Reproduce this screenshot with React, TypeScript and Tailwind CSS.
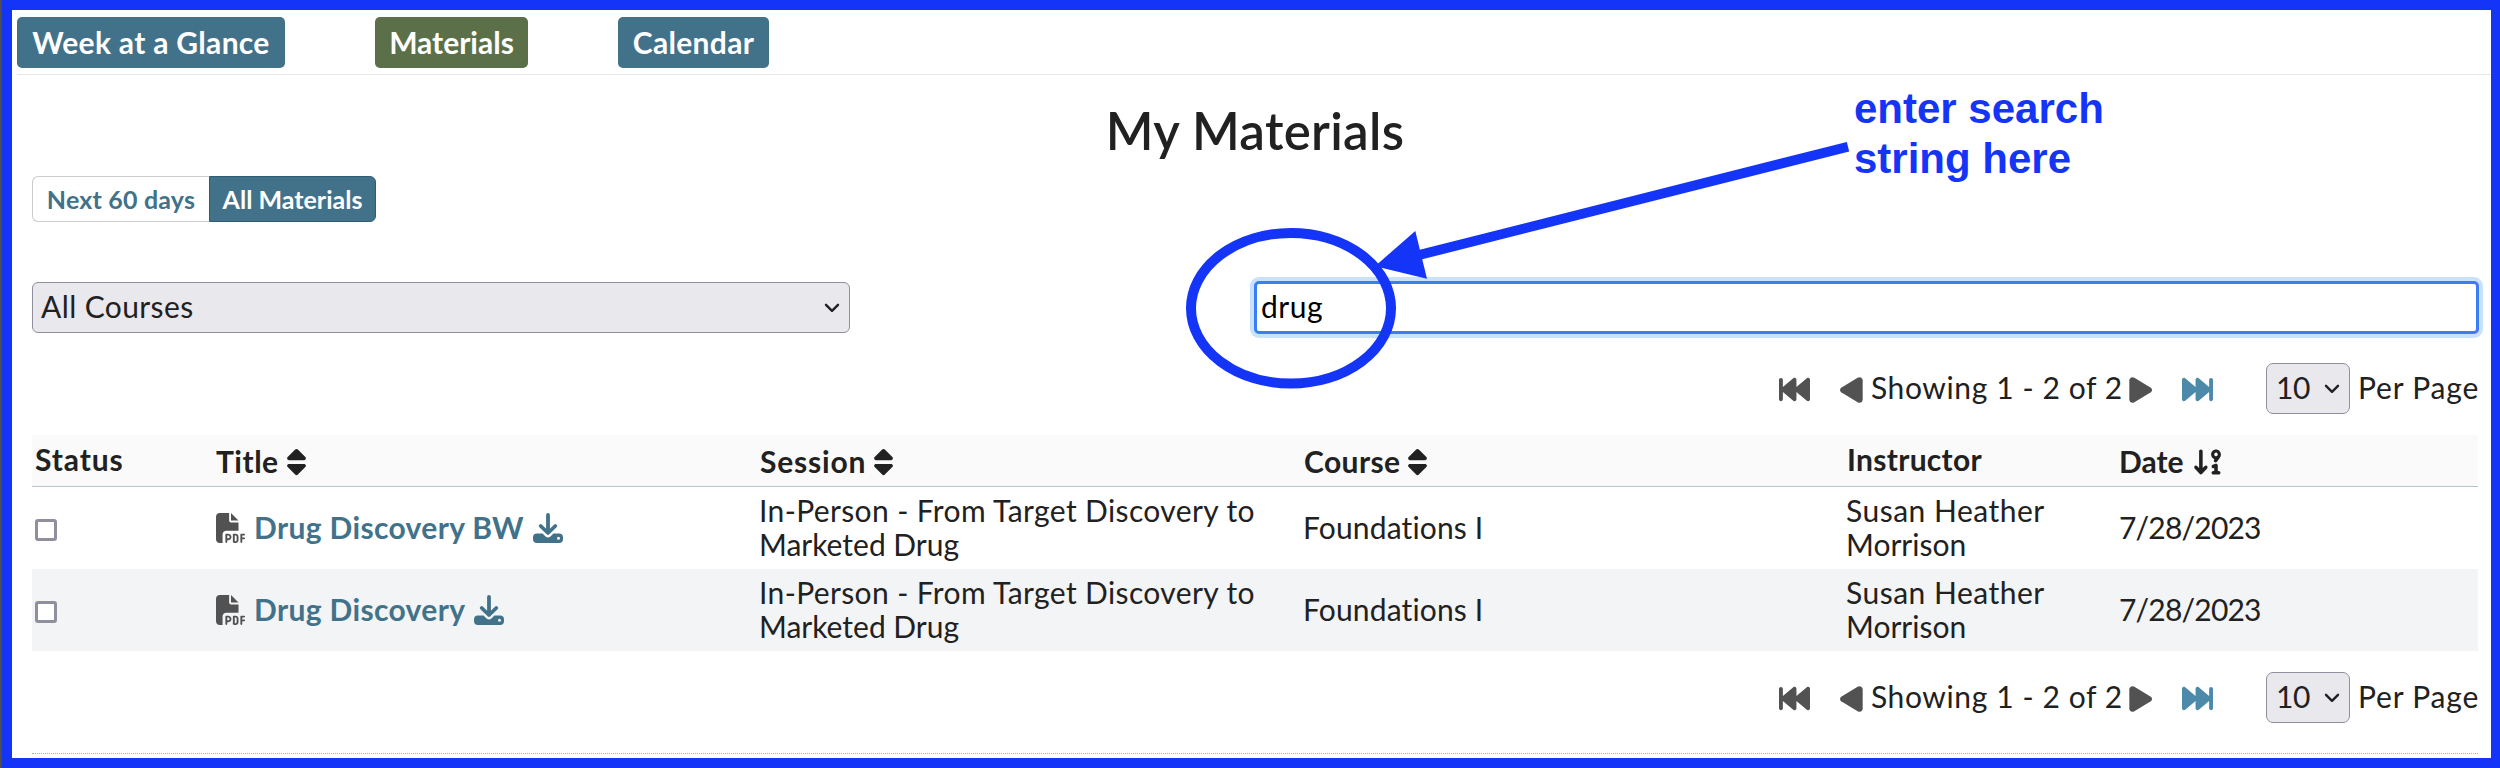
import React from "react";
import { FaArrowDown91, FaBackwardFast, FaFilePdf, FaForwardFast, FaSort } from "react-icons/fa6";

function Chevron({ className }: { className: string }) {
  return (
    <svg viewBox="0 0 16 10" className={className} fill="none" stroke="#222" strokeWidth="2.4" strokeLinecap="round" strokeLinejoin="round">
      <path d="M2 1.8 L8 7.8 L14 1.8" />
    </svg>
  );
}

function Caret({ className }: { className: string }) {
  return (
    <svg viewBox="0 0 23 26" className={`h-[26px] w-[23px] shrink-0 text-[#525252] ${className}`}>
      <path d="M1.200 10.800L17.600 0.800C20 -0.600 22.700 0.900 22.700 3.600V22.400C22.700 25.100 20 26.600 17.600 25.200L1.200 15.200C-0.400 14.200 -0.400 11.800 1.200 10.800Z" fill="currentColor" />
    </svg>
  );
}

function DownloadIcon() {
  return (
    <svg viewBox="0 0 30 30" className="h-[30px] w-[30px] shrink-0 text-[#42728a]">
      <path d="M15 1.900V19M7.700 13L15 20L22.300 13" fill="none" stroke="currentColor" strokeWidth="3.800" strokeLinecap="round" strokeLinejoin="round" />
      <path fillRule="evenodd" fill="currentColor" d="M4 20.600H9.500L12.800 23.700Q15 25.300 17.200 23.700L20.500 20.600H26Q30 20.600 30 24.600V26Q30 30 26 30H4Q0 30 0 26V24.600Q0 20.600 4 20.600ZM25.500 23.800A1.500 1.500 0 1 0 25.500 26.800A1.500 1.500 0 1 0 25.500 23.800Z" />
    </svg>
  );
}

function Pager() {
  return (
    <div className="flex h-[51px] items-center justify-end">
      <FaBackwardFast className="mt-[2px] h-[31px] w-[31px] text-[#525252]" />
      <Caret className="ml-[30px] mt-[3px]" />
      <span className="ml-[8px] w-[258px] whitespace-nowrap pb-[4px] tracking-[0.6px]">Showing 1 - 2 of 2</span>
      <Caret className="mt-[3px] rotate-180" />
      <FaForwardFast className="ml-[30px] mt-[2px] h-[31px] w-[31px] text-[#4d89a8]" />
      <div className="ml-[53px] flex h-[51px] w-[84px] items-center justify-between rounded-[7px] border border-[#8f8f9d] bg-[#e9e8ed] pl-[9px] pr-[9px]">
        <span className="pb-[4px] tracking-[-0.5px]">10</span>
        <Chevron className="h-[10px] w-[16px]" />
      </div>
      <span className="ml-[8px] w-[120px] whitespace-nowrap pb-[4px] tracking-[0.8px]">Per Page</span>
    </div>
  );
}

const GRID = "grid grid-cols-[181px_544px_544px_543px_272px_362px]";

function HeaderCell({ label, icon, tracking = "" }: { label: string; icon?: React.ReactNode; tracking?: string }) {
  return (
    <div className={icon ? "flex items-center gap-[8px] pl-[3px] pt-[3px]" : "flex items-center pb-[4px] pl-[3px]"}>
      <span className={`font-bold ${icon ? "pb-[3px]" : ""} ${tracking}`}>{label}</span>
      {icon}
    </div>
  );
}

function Row({ title, striped }: { title: string; striped?: boolean }) {
  return (
    <div className={`${GRID} h-[82px] items-center ${striped ? "bg-[#f3f4f6]" : "bg-white"}`}>
      <div className="pl-[3px]">
        <div className="mt-[4px] h-[22px] w-[22px] rounded-[3px] border-3 border-[#8f8f9d] bg-white" />
      </div>
      <div className="flex items-center pl-[3px]">
        <FaFilePdf className="h-[30px] w-[30px] text-[#525252]" />
        <span className="ml-[8px] mr-[9px] pb-[3px] font-bold tracking-[0.35px] text-[#42728a]">{title}</span>
        <DownloadIcon />
      </div>
      <div className="pb-[3px] pl-[2px]">
        <span className="tracking-[0.38px]">In-Person - From Target Discovery to</span>
        <br />
        Marketed Drug
      </div>
      <div className="pb-[3px] pl-[2px] tracking-[0.15px]">Foundations I</div>
      <div className="pb-[3px] pl-[2px]">
        <span className="tracking-[0.5px]">Susan Heather</span>
        <br />
        Morrison
      </div>
      <div className="pb-[3px] pl-[3px] tracking-[-0.8px]">7/28/2023</div>
    </div>
  );
}

export default function App() {
  const sort = <FaSort className="h-[30px] w-[19px]" />;
  return (
    <div className="relative h-[768px] w-[2500px] overflow-hidden border-l-2 border-[#4d4d4d] font-['Lato','Liberation_Sans',sans-serif] text-[30px] leading-[34px] text-[#212121] [font-variant-ligatures:none]">
      <div className="h-[768px] border-x-[10px] border-y-[10px] border-r-[9px] border-[#1434f7] bg-white">
        <nav className="ml-[5px] flex h-[65px] border-b border-[#e6e6e6] pt-[7px] font-bold text-white">
          <div className="flex h-[51px] w-[268px] items-center justify-center rounded-[5px] bg-[#42728a] pb-[2px] tracking-[0.3px]">Week at a Glance</div>
          <div className="ml-[90px] flex h-[51px] w-[153px] items-center justify-center rounded-[5px] bg-[#5b7049] pb-[2px]">Materials</div>
          <div className="ml-[90px] flex h-[51px] w-[151px] items-center justify-center rounded-[5px] bg-[#42728a] pb-[2px] tracking-[0.3px]">Calendar</div>
        </nav>
        <main className="ml-[20px] w-[2446px]">
          <h1 className="h-[101px] pt-[25px] text-center text-[51px] font-semibold leading-[62px] tracking-[0.3px]">My Materials</h1>
          <div className="flex h-[46px] text-[25px] font-bold">
            <div className="flex w-[177px] items-center justify-center rounded-l-[6px] border border-r-0 border-[#ccc] pb-px tracking-[0.2px] text-[#42728a]">Next 60 days</div>
            <div className="flex w-[167px] items-center justify-center rounded-r-[6px] border border-[#2f5d74] bg-[#42728a] pb-px text-white">All Materials</div>
          </div>
          <div className="mt-[59px] flex h-[53px] justify-between">
            <div className="mt-px flex h-[51px] w-[818px] items-center justify-between rounded-[6px] border border-[#8f8f9d] bg-[#e9e8ed] pl-[8px] pr-[9px]">
              <span className="pb-[4px] tracking-[0.4px]">All Courses</span>
              <Chevron className="h-[10px] w-[16px]" />
            </div>
            <div className="-mr-px flex h-[53px] w-[1225px] items-center rounded-[5px] border-3 border-[#3a7df5] bg-white pb-[3px] pl-[4px] tracking-[0.5px] text-black shadow-[0_0_0_4px_#c9e2fb]">drug</div>
          </div>
          <div className="mt-[29px]"><Pager /></div>
          <div className="mt-[21px]">
            <div className={`${GRID} h-[52px] border-b border-[#bcc4cb] bg-[#fafafa]`}>
              <HeaderCell label="Status" tracking="tracking-[0.9px]" />
              <HeaderCell label="Title" tracking="tracking-[0.5px]" icon={sort} />
              <HeaderCell label="Session" tracking="tracking-[0.8px]" icon={sort} />
              <HeaderCell label="Course" tracking="tracking-[0.4px]" icon={sort} />
              <HeaderCell label="Instructor" tracking="tracking-[0.3px]" />
              <HeaderCell label="Date" icon={<FaArrowDown91 className="h-[30px] w-[32px]" />} />
            </div>
            <Row title="Drug Discovery BW" />
            <Row title="Drug Discovery" striped />
          </div>
          <div className="mt-[21px]"><Pager /></div>
          <div className="mt-[30px] border-t border-dotted border-[#c8a882]" />
        </main>
      </div>
      <svg className="pointer-events-none absolute inset-y-0 -left-[2px] h-[768px] w-[2500px]" viewBox="0 0 2500 768">
        <rect x="0" y="0" width="2" height="28" fill="#d0742c" />
        <ellipse cx="1291" cy="308.300" rx="100" ry="75.300" fill="none" stroke="#1434f7" strokeWidth="10" />
        <path d="M1848 146.700L1420 254.800" stroke="#1434f7" strokeWidth="9.800" />
        <path d="M1375 266.200L1415.300 231L1427 278.700Z" fill="#1434f7" />
      </svg>
      <div className="absolute left-[1852px] top-[84px] font-['Liberation_Sans',Arial,sans-serif] text-[42px] font-bold leading-[50px] text-[#1434f7]">
        enter search<br />string here
      </div>
    </div>
  );
}
